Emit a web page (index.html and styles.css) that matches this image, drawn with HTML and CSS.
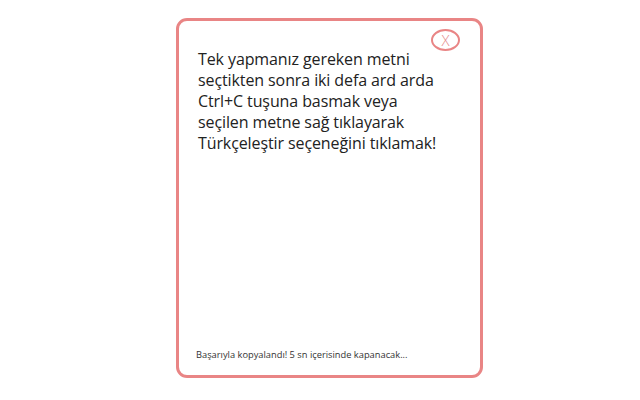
FILE: index.html
```
<!DOCTYPE html>
<html lang="tr">
<head>
<meta charset="utf-8">
<link rel="stylesheet" href="styles.css">
</head>
<body>
<div class="stage">
  <div class="popup">
    <button class="close">X</button>
    <p class="message">Tek yapmanız gereken metni seçtikten sonra iki defa ard arda Ctrl+C tuşuna basmak veya seçilen metne sağ tıklayarak Türkçeleştir seçeneğini tıklamak!</p>
    <p class="status">Başarıyla kopyalandı! 5 sn içerisinde kapanacak...</p>
  </div>
</div>
</body>
</html>
```
FILE: styles.css
```
html, body {
  margin: 0;
  background: #ffffff;
}
.stage {
  padding: 18px 0 0 176px;
}
.popup {
  position: relative;
  box-sizing: border-box;
  width: 307px;
  height: 360px;
  border: 3px solid #e98585;
  border-radius: 11px;
  padding: 28px 37px 14px 19px;
  display: flex;
  flex-direction: column;
  justify-content: space-between;
  font-family: "Open Sans", "Noto Sans", sans-serif;
  color: #222;
}
.message {
  margin: 0;
  font-size: 16px;
  line-height: 21px;
  letter-spacing: -0.1px;
}
.status {
  margin: 0 0 0 -2px;
  font-size: 9.3px;
  line-height: 12px;
  color: #333;
}
.close {
  position: absolute;
  top: 8px;
  right: 20px;
  width: 29px;
  height: 22px;
  box-sizing: border-box;
  border: 2px solid #e98585;
  border-radius: 50%;
  background: #fff;
  color: #e58a8a;
  font-family: "Open Sans", sans-serif;
  font-weight: 300;
  font-size: 15px;
  line-height: 15px;
  padding: 0;
  display: flex;
  align-items: center;
  justify-content: center;
}
```
